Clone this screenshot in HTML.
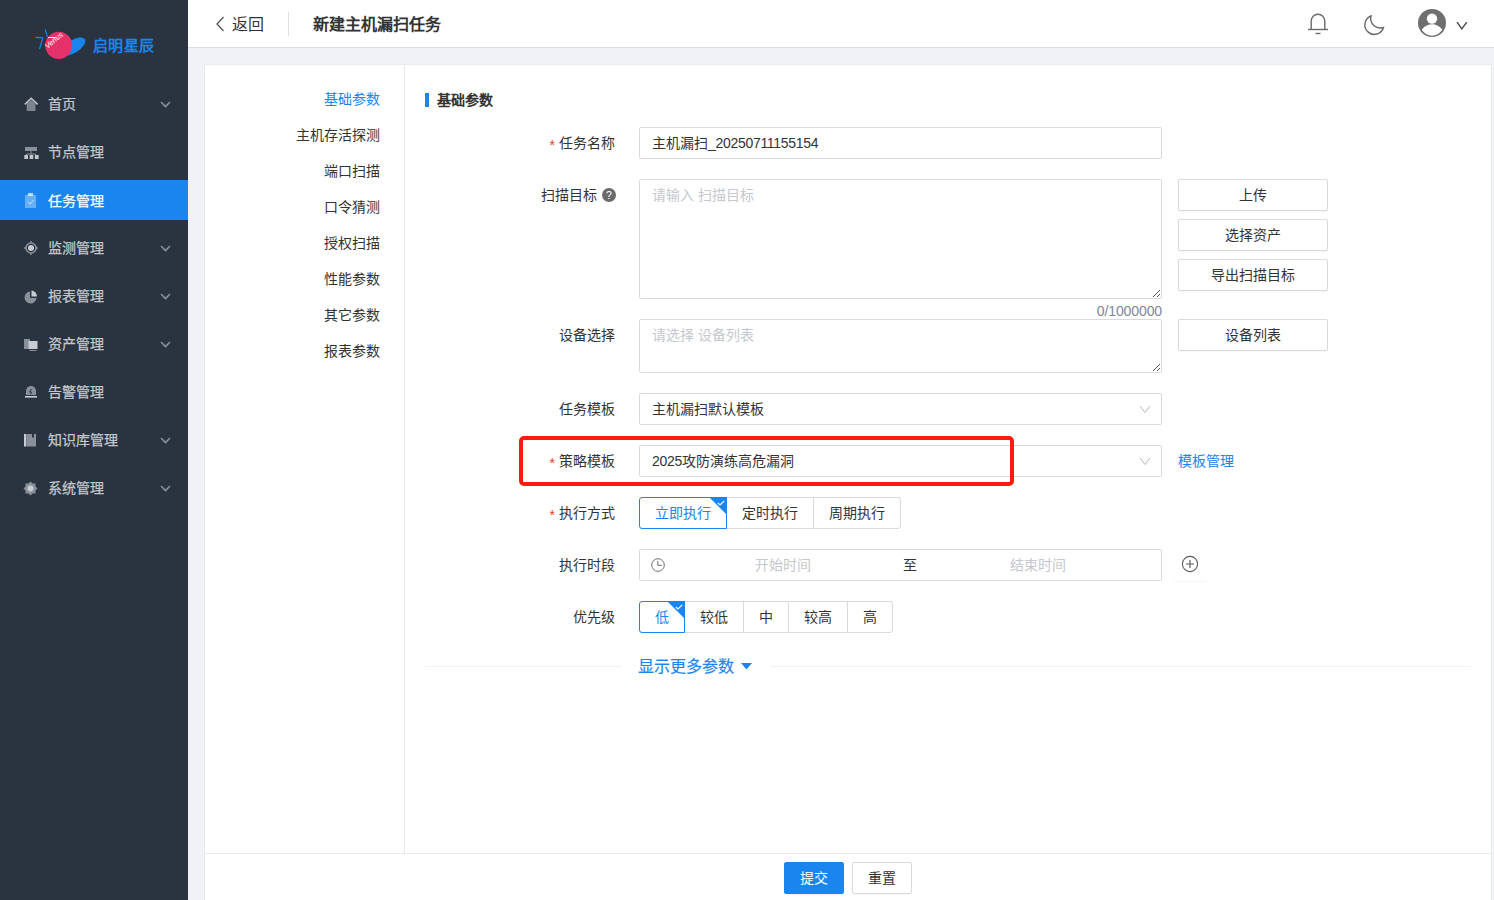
<!DOCTYPE html>
<html lang="zh-CN">
<head>
<meta charset="utf-8">
<style>
*{box-sizing:border-box;margin:0;padding:0}
html,body{width:1494px;height:900px;overflow:hidden;background:#f0f2f5;font-family:"Liberation Sans",sans-serif;font-size:14px;color:#333}
.abs{position:absolute}
#side{position:absolute;left:0;top:0;width:188px;height:900px;background:#2a3340}
.mi{position:absolute;left:0;width:188px;height:40px;line-height:40px;color:#c3c7cd;font-weight:500;-webkit-text-stroke:0.25px currentColor}
.mi .t{position:absolute;left:48px;top:1px}
.mi.act{background:#1a85ee;color:#fff}
.mi svg{position:absolute}
.chev{position:absolute;left:160px;top:18px}
#hdr{position:absolute;left:188px;top:0;width:1306px;height:48px;background:#fff;border-bottom:1px solid #dcdee2}
#card{position:absolute;left:204px;top:64px;width:1288px;height:850px;background:#fff;border:1px solid #e8eaec}
.nav{position:absolute;right:0;width:200px;text-align:right;line-height:20px;color:#333}
.lbl{position:absolute;right:879px;text-align:right;line-height:20px;color:#333;white-space:nowrap}
.req{color:#ed4014;margin-right:4px;position:relative;top:2px}
.lat{letter-spacing:-0.3px}
.inp{position:absolute;left:639px;width:523px;height:32px;border:1px solid #dadada;border-radius:2px;background:#fff;padding-left:12px;line-height:30px;color:#333}
.ph{color:#c5c8ce}
.btn{position:absolute;height:32px;border:1px solid #dadada;border-radius:2px;background:#fff;text-align:center;line-height:30px;color:#333;box-shadow:0 1px 1px rgba(0,0,0,.04)}
.rg{position:absolute;left:639px;height:32px;display:flex}
.rb{height:32px;border:1px solid #dadada;margin-left:-1px;padding:0 15px;line-height:30px;color:#333;position:relative;background:#fff}
.rb:first-child{margin-left:0;border-radius:3px 0 0 3px}
.rb:last-child{border-radius:0 3px 3px 0}
.rb.on{border-color:#1a85ee;color:#1a85ee;z-index:2}
.corner{position:absolute;right:-1px;top:-1px;width:0;height:0;border-top:18px solid #1a85ee;border-left:18px solid transparent}
</style>
</head>
<body>
<!-- SIDEBAR -->
<div id="side">
  <!-- logo -->
  <svg class="abs" style="left:30px;top:28px" width="64" height="36" viewBox="0 0 64 36">
    <ellipse cx="43.5" cy="18.5" rx="13.5" ry="6.3" transform="rotate(-33 43.5 18.5)" fill="#1a85ee"/>
    <circle cx="28.7" cy="17.3" r="13.6" fill="#e5326b"/>
    <path d="M5.3 9.3 L12.8 9.8 L9.5 21" stroke="#1a85ee" stroke-width="1.2" fill="none"/>
    <path d="M15.2 1.4 L17.5 9.3" stroke="#1a85ee" stroke-width="1.2" fill="none"/>
    <path d="M18 9.5 L25.5 9.5" stroke="#fff" stroke-width="1" fill="none"/>
    <text x="17.5" y="21" font-size="7.5" fill="#fff" font-style="italic" transform="rotate(-40 17.5 21)" font-family="Liberation Sans">Venus</text>
  </svg>
  <div class="abs" style="left:93px;top:36px;line-height:20px;font-size:15px;font-weight:bold;color:#1a85ee;letter-spacing:0.3px">启明星辰</div>

  <div class="mi" style="top:83px"><svg style="left:24px;top:14px" width="15" height="14" viewBox="0 0 15 14"><path d="M0.8 7.4 L7.2 1.3 L13.6 7.4" stroke="#c3c7cd" stroke-width="1.5" fill="none"/><path d="M2.7 6.2 L7.2 2.9 L11.5 6.2 V13.9 H2.7Z" fill="#7d848e"/></svg><span class="t">首页</span><svg class="chev" width="11" height="7" viewBox="0 0 11 7"><path d="M1 1 L5.5 5.5 L10 1" stroke="#8a9099" stroke-width="1.6" fill="none"/></svg></div>
  <div class="mi" style="top:131px"><svg style="left:24px;top:15px" width="15" height="13" viewBox="0 0 15 13"><rect x="1" y="1" width="12" height="4" fill="#8a9099"/><path d="M7 5 V8 M2.5 8 H11.5 V9 M2.5 8 V9 M7 8 V9" stroke="#8a9099" stroke-width="1" fill="none"/><rect x="0.3" y="9" width="3.7" height="4" fill="#c3c7cd"/><rect x="5.6" y="9" width="3.7" height="4" fill="#c3c7cd"/><rect x="10.9" y="9" width="3.7" height="4" fill="#c3c7cd"/></svg><span class="t">节点管理</span></div>
  <div class="mi act" style="top:180px"><svg style="left:25px;top:13px" width="12" height="15" viewBox="0 0 12 15"><rect x="0" y="2" width="11" height="13" fill="rgba(255,255,255,.35)"/><rect x="3" y="0" width="5" height="3" fill="rgba(255,255,255,.7)"/><path d="M3 9 L5 11 L8.5 7" stroke="rgba(255,255,255,.6)" stroke-width="1" fill="none"/></svg><span class="t" style="color:#fff">任务管理</span></div>
  <div class="mi" style="top:227px"><svg style="left:24px;top:14px" width="15" height="15" viewBox="0 0 15 15"><circle cx="7" cy="7" r="5" stroke="#8a9099" stroke-width="1.6" fill="none"/><circle cx="7" cy="7" r="3" fill="#c8ccd2"/><path d="M7 0 V2 M7 12 V14 M0 7 H2 M12 7 H14" stroke="#8a9099" stroke-width="1.4"/></svg><span class="t">监测管理</span><svg class="chev" width="11" height="7" viewBox="0 0 11 7"><path d="M1 1 L5.5 5.5 L10 1" stroke="#8a9099" stroke-width="1.6" fill="none"/></svg></div>
  <div class="mi" style="top:275px"><svg style="left:24px;top:15px" width="14" height="14" viewBox="0 0 14 14"><path d="M6 1.5 A6 6 0 1 0 12.5 8 H6Z" fill="#8a9099"/><path d="M7.5 0.5 A6 6 0 0 1 13 6.5 H7.5Z" fill="#c8ccd2"/></svg><span class="t">报表管理</span><svg class="chev" width="11" height="7" viewBox="0 0 11 7"><path d="M1 1 L5.5 5.5 L10 1" stroke="#8a9099" stroke-width="1.6" fill="none"/></svg></div>
  <div class="mi" style="top:323px"><svg style="left:24px;top:16px" width="14" height="13" viewBox="0 0 14 13"><rect x="0" y="0" width="6" height="10" fill="#8a9099"/><rect x="4.5" y="2" width="9" height="8" fill="#c8ccd2"/><rect x="5.5" y="11" width="7" height="1" fill="#8a9099"/></svg><span class="t">资产管理</span><svg class="chev" width="11" height="7" viewBox="0 0 11 7"><path d="M1 1 L5.5 5.5 L10 1" stroke="#8a9099" stroke-width="1.6" fill="none"/></svg></div>
  <div class="mi" style="top:371px"><svg style="left:24px;top:14px" width="14" height="14" viewBox="0 0 14 14"><path d="M2 10 V6 A5 5 0 0 1 12 6 V10Z" fill="#8a9099"/><rect x="1" y="11" width="12" height="1.6" fill="#c8ccd2"/><path d="M7.5 4 L5.5 7 H7.5 L6.5 9.5" stroke="#2a3340" stroke-width="1" fill="none"/></svg><span class="t">告警管理</span></div>
  <div class="mi" style="top:419px"><svg style="left:24px;top:15px" width="14" height="13" viewBox="0 0 14 13"><rect x="0" y="0" width="2.5" height="12.5" fill="#c8ccd2"/><rect x="3" y="0" width="9" height="12.5" fill="#8a9099"/><path d="M8 0 V4 L9 3 L10 4 V0Z" fill="#2a3340"/></svg><span class="t">知识库管理</span><svg class="chev" width="11" height="7" viewBox="0 0 11 7"><path d="M1 1 L5.5 5.5 L10 1" stroke="#8a9099" stroke-width="1.6" fill="none"/></svg></div>
  <div class="mi" style="top:467px"><svg style="left:23px;top:14px" width="15" height="15" viewBox="0 0 15 15"><path d="M7.5 0.5 L9.5 2.5 L12.5 2.5 L12.5 5.5 L14.5 7.5 L12.5 9.5 L12.5 12.5 L9.5 12.5 L7.5 14.5 L5.5 12.5 L2.5 12.5 L2.5 9.5 L0.5 7.5 L2.5 5.5 L2.5 2.5 L5.5 2.5Z" fill="#8a9099"/><circle cx="7.5" cy="7.5" r="3" fill="#c8ccd2"/></svg><span class="t">系统管理</span><svg class="chev" width="11" height="7" viewBox="0 0 11 7"><path d="M1 1 L5.5 5.5 L10 1" stroke="#8a9099" stroke-width="1.6" fill="none"/></svg></div>
</div>

<!-- HEADER -->
<div id="hdr">
  <svg class="abs" style="left:27px;top:16px" width="10" height="16" viewBox="0 0 10 16"><path d="M8.5 1 L2 8 L8.5 15" stroke="#555" stroke-width="1.3" fill="none"/></svg>
  <div class="abs" style="left:44px;top:14px;font-size:16px;line-height:22px;color:#333">返回</div>
  <div class="abs" style="left:100px;top:12px;width:1px;height:24px;background:#e0e0e0"></div>
  <div class="abs" style="left:125px;top:14px;font-size:16px;line-height:22px;color:#333;font-weight:bold">新建主机漏扫任务</div>
  <svg class="abs" style="left:1118px;top:11px" width="24" height="26" viewBox="0 0 24 26"><path d="M5.2 18.5 V10 A6.8 6.8 0 0 1 18.8 10 V18.5" stroke="#6a6a6a" stroke-width="1.4" fill="none"/><path d="M2 18.5 H22" stroke="#6a6a6a" stroke-width="1.4"/><path d="M9.5 22.5 H14.5" stroke="#6a6a6a" stroke-width="1.4"/></svg>
  <svg class="abs" style="left:1174px;top:13px" width="24" height="24" viewBox="0 0 24 24"><path d="M9 3 A9.5 9.5 0 1 0 21.5 14.5 A9.7 9.7 0 0 1 9 3Z" stroke="#6a6a6a" stroke-width="1.4" fill="none" stroke-linejoin="miter"/></svg>
  <svg class="abs" style="left:1230px;top:9px" width="28" height="28" viewBox="0 0 28 28"><defs><clipPath id="cc"><circle cx="14" cy="14" r="14"/></clipPath></defs><circle cx="14" cy="14" r="14" fill="#6f6f6f"/><circle cx="14" cy="9.6" r="5.2" fill="#fff"/><path d="M3.7 20.8 C7 16.6 10.5 15.3 14 15.3 C17.5 15.3 21 16.6 24.3 20.8 C21.8 24.7 18 26.8 14 26.8 C10 26.8 6.2 24.7 3.7 20.8Z" fill="#fff"/></svg>
  <svg class="abs" style="left:1268px;top:21px" width="12" height="9" viewBox="0 0 12 9"><path d="M1 1.2 L5.8 7.8 L10.8 1.2" stroke="#444" stroke-width="1.4" fill="none"/></svg>
</div>

<div id="card">
  <div class="abs" style="left:199px;top:0;width:1px;height:788px;background:#e8eaec"></div>
  <div class="abs" style="left:0;top:788px;width:1286px;height:1px;background:#e8eaec"></div>
</div>
<!-- left nav -->
<div class="nav" style="left:180px;top:89px;color:#1a85ee">基础参数</div>
<div class="nav" style="left:180px;top:125px">主机存活探测</div>
<div class="nav" style="left:180px;top:161px">端口扫描</div>
<div class="nav" style="left:180px;top:197px">口令猜测</div>
<div class="nav" style="left:180px;top:233px">授权扫描</div>
<div class="nav" style="left:180px;top:269px">性能参数</div>
<div class="nav" style="left:180px;top:305px">其它参数</div>
<div class="nav" style="left:180px;top:341px">报表参数</div>

<!-- section title -->
<div class="abs" style="left:425px;top:93px;width:4px;height:14px;background:#1a85ee"></div>
<div class="abs" style="left:437px;top:90px;line-height:20px;font-weight:bold;color:#333">基础参数</div>

<!-- rows -->
<div class="lbl" style="top:127px;line-height:32px"><span class="req">*</span>任务名称</div>
<div class="inp" style="top:127px">主机漏扫<span class="lat">_20250711155154</span></div>

<div class="lbl" style="top:179px;line-height:32px;right:878px">扫描目标<svg style="margin-left:5px;vertical-align:-2px" width="14" height="14" viewBox="0 0 14 14"><circle cx="7" cy="7" r="7" fill="#6b6b6b"/><text x="7" y="11" font-size="10.5" text-anchor="middle" fill="#fff" font-family="Liberation Sans">?</text></svg></div>
<div class="inp" style="top:179px;height:120px;line-height:30px"><span class="ph">请输入 扫描目标</span></div>
<svg class="abs" style="left:1152px;top:289px" width="9" height="9" viewBox="0 0 9 9"><path d="M1 8 L8 1 M5 8 L8 5" stroke="#555" stroke-width="1"/></svg>
<div class="abs" style="left:1062px;top:301px;width:100px;text-align:right;line-height:20px;color:#808695"><span class="lat" style="letter-spacing:-0.1px">0/1000000</span></div>

<div class="btn" style="left:1178px;top:179px;width:150px">上传</div>
<div class="btn" style="left:1178px;top:219px;width:150px">选择资产</div>
<div class="btn" style="left:1178px;top:259px;width:150px">导出扫描目标</div>

<div class="lbl" style="top:319px;line-height:32px">设备选择</div>
<div class="inp" style="top:319px;height:54px"><span class="ph">请选择 设备列表</span></div>
<svg class="abs" style="left:1152px;top:363px" width="9" height="9" viewBox="0 0 9 9"><path d="M1 8 L8 1 M5 8 L8 5" stroke="#555" stroke-width="1"/></svg>
<div class="btn" style="left:1178px;top:319px;width:150px">设备列表</div>

<div class="lbl" style="top:393px;line-height:32px">任务模板</div>
<div class="inp" style="top:393px">主机漏扫默认模板</div>
<svg class="abs" style="left:1139px;top:405px" width="12" height="9" viewBox="0 0 12 9"><path d="M1 1 L6 7.5 L11 1" stroke="#b5b8bd" stroke-width="1" fill="none"/></svg>

<div class="lbl" style="top:445px;line-height:32px"><span class="req">*</span>策略模板</div>
<div class="inp" style="top:445px"><span class="lat">2025</span>攻防演练高危漏洞</div>
<svg class="abs" style="left:1139px;top:457px" width="12" height="9" viewBox="0 0 12 9"><path d="M1 1 L6 7.5 L11 1" stroke="#b5b8bd" stroke-width="1" fill="none"/></svg>
<div class="abs" style="left:1178px;top:445px;line-height:32px;color:#1a85ee">模板管理</div>
<div class="abs" style="left:519px;top:436px;width:495px;height:50px;border:4px solid #fb1b10;border-radius:5px"></div>

<div class="lbl" style="top:497px;line-height:32px"><span class="req">*</span>执行方式</div>
<div class="rg" style="top:497px">
  <div class="rb on">立即执行<span class="corner"></span><svg class="abs" style="right:1px;top:2px" width="8" height="6" viewBox="0 0 8 6"><path d="M0.8 2.8 L3 5 L7.2 0.8" stroke="#fff" stroke-width="1.1" fill="none"/></svg></div>
  <div class="rb">定时执行</div>
  <div class="rb">周期执行</div>
</div>

<div class="lbl" style="top:549px;line-height:32px">执行时段</div>
<div class="inp" style="top:549px"></div>
<svg class="abs" style="left:651px;top:558px" width="14" height="14" viewBox="0 0 14 14"><circle cx="7" cy="7" r="6.3" stroke="#707070" stroke-width="1" fill="none"/><path d="M6.8 3 V7.3 H10.8" stroke="#707070" stroke-width="1" fill="none"/></svg>
<div class="abs ph" style="left:755px;top:549px;line-height:32px">开始时间</div>
<div class="abs" style="left:903px;top:549px;line-height:32px;color:#333">至</div>
<div class="abs ph" style="left:1010px;top:549px;line-height:32px">结束时间</div>
<svg class="abs" style="left:1181px;top:555px" width="18" height="18" viewBox="0 0 18 18"><circle cx="9" cy="9" r="7.6" stroke="#5c5c5c" stroke-width="1.1" fill="none"/><path d="M9 5 V13 M5 9 H13" stroke="#5c5c5c" stroke-width="1.2"/></svg><div class="abs" style="left:1174px;top:581px;width:32px;height:1px;background:#f4f5f6"></div>

<div class="lbl" style="top:601px;line-height:32px">优先级</div>
<div class="rg" style="top:601px">
  <div class="rb on">低<span class="corner"></span><svg class="abs" style="right:1px;top:2px" width="8" height="6" viewBox="0 0 8 6"><path d="M0.8 2.8 L3 5 L7.2 0.8" stroke="#fff" stroke-width="1.1" fill="none"/></svg></div>
  <div class="rb">较低</div>
  <div class="rb">中</div>
  <div class="rb">较高</div>
  <div class="rb">高</div>
</div>

<div class="abs" style="left:425px;top:666px;width:197px;height:1px;background:#f0f1f2"></div>
<div class="abs" style="left:770px;top:666px;width:701px;height:1px;background:#f0f1f2"></div>
<div class="abs" style="left:638px;top:656px;line-height:22px;font-size:16px;color:#1a85ee;-webkit-text-stroke:0.2px currentColor">显示更多参数</div>
<svg class="abs" style="left:741px;top:663px" width="11" height="7" viewBox="0 0 11 7"><path d="M0 0 H11 L5.5 6.5Z" fill="#1a85ee"/></svg>

<!-- footer -->
<div class="btn" style="left:784px;top:862px;width:60px;background:#1a85ee;border-color:#1a85ee;color:#fff">提交</div>
<div class="btn" style="left:852px;top:862px;width:60px">重置</div>

</body>
</html>
